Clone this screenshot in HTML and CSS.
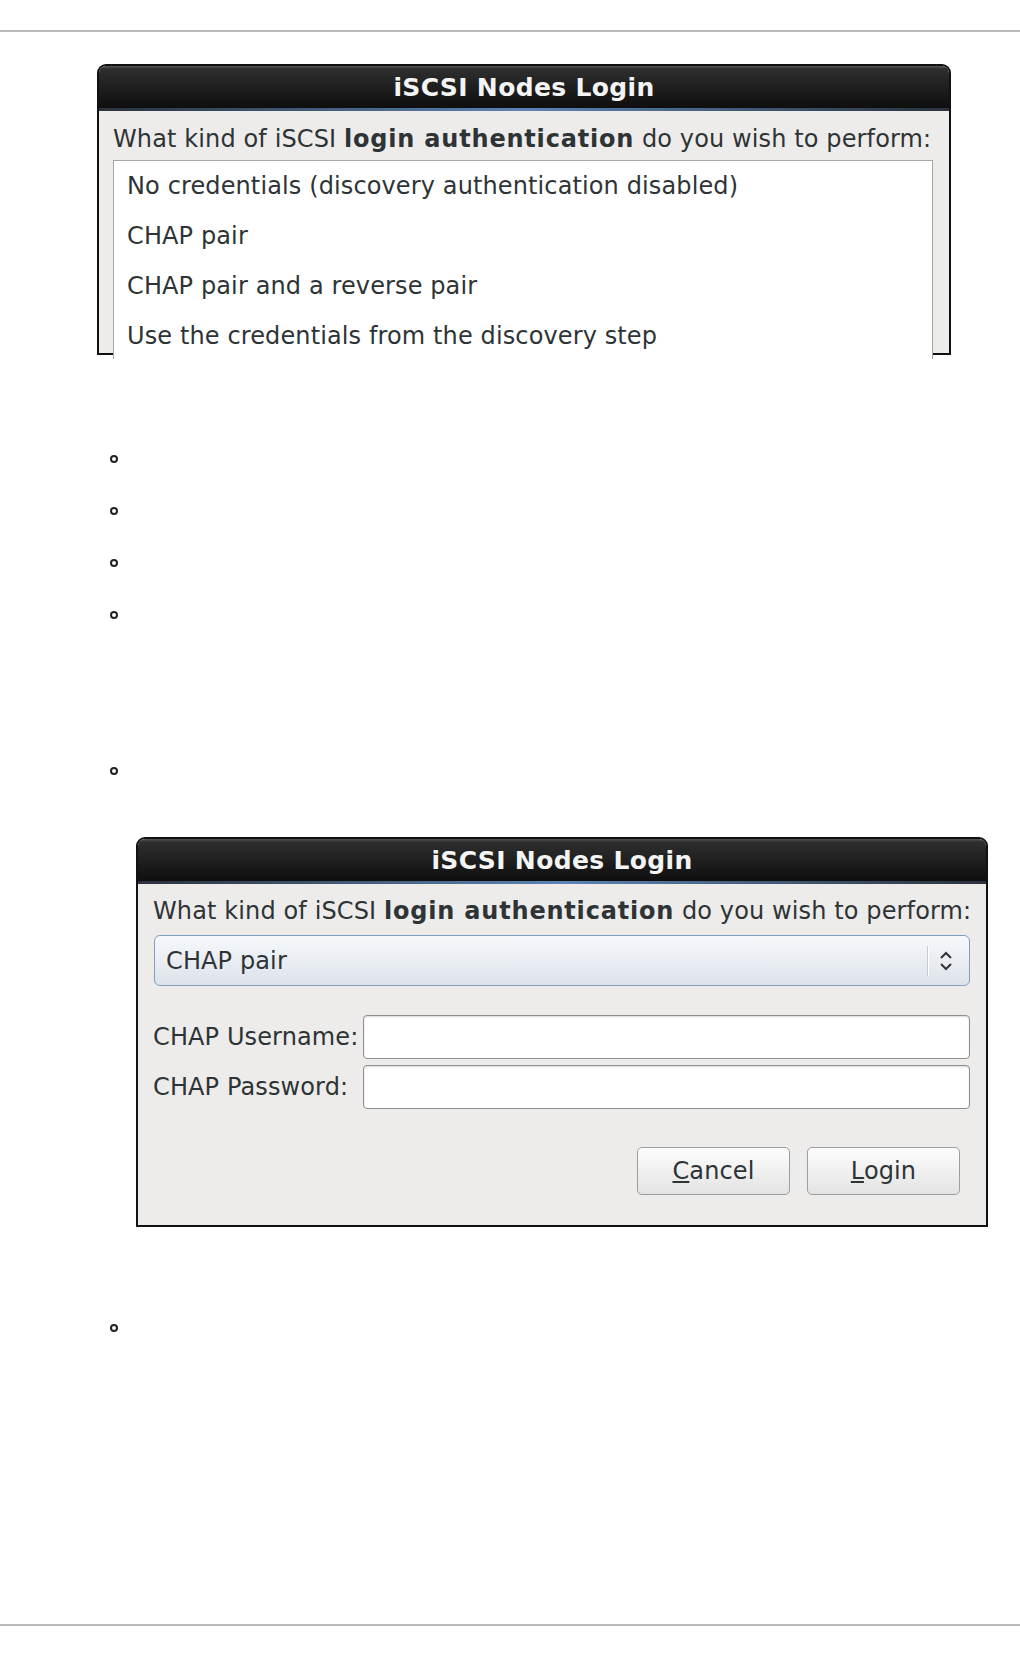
FILE: index.html
```html
<!DOCTYPE html>
<html lang="en">
<head>
    <meta charset="UTF-8">
    <title>iSCSI Nodes Login</title>
    <link rel="stylesheet" href="styles.css">
</head>
<body>
<div class="page">
    <div class="top-rule"></div>

    <div class="content">
        <div class="dialog dialog-list">
            <div class="dialog-title">iSCSI Nodes Login</div>
            <div class="dialog-body">
                <p class="question">What kind of iSCSI <b>login authentication</b> do you wish to perform:</p>
                <ul class="listbox">
                    <li>No credentials (discovery authentication disabled)</li>
                    <li>CHAP pair</li>
                    <li>CHAP pair and a reverse pair</li>
                    <li>Use the credentials from the discovery step</li>
                </ul>
            </div>
        </div>

        <ul class="steps">
            <li class="step"><div class="step-mark"><span class="ring"></span></div></li>
            <li class="step"><div class="step-mark"><span class="ring"></span></div></li>
            <li class="step"><div class="step-mark"><span class="ring"></span></div></li>
            <li class="step"><div class="step-mark"><span class="ring"></span></div></li>
            <li class="step step-figure">
                <div class="step-mark"><span class="ring"></span></div>
                <div class="dialog dialog-form">
                    <div class="dialog-title">iSCSI Nodes Login</div>
                    <div class="dialog-body">
                        <p class="question">What kind of iSCSI <b>login authentication</b> do you wish to perform:</p>
                        <div class="combo">
                            <span class="combo-value">CHAP pair</span>
                            <span class="combo-sep"></span>
                            <span class="combo-arrow">
                                <svg width="14" height="22" viewBox="0 0 14 22">
                                    <polyline points="2,8 7,3 12,8" fill="none" stroke="#333" stroke-width="2"/>
                                    <polyline points="2,14 7,19 12,14" fill="none" stroke="#333" stroke-width="2"/>
                                </svg>
                            </span>
                        </div>
                        <div class="fields">
                            <label for="chap-user">CHAP Username:</label>
                            <input type="text" id="chap-user" class="entry">
                            <label for="chap-pass">CHAP Password:</label>
                            <input type="password" id="chap-pass" class="entry">
                        </div>
                        <div class="buttons">
                            <button class="btn"><u>C</u>ancel</button>
                            <button class="btn"><u>L</u>ogin</button>
                        </div>
                    </div>
                </div>
            </li>
            <li class="step step-last"><div class="step-mark"><span class="ring"></span></div></li>
        </ul>
    </div>

    <div class="bottom-rule"></div>
</div>
</body>
</html>
```

FILE: styles.css
```css
body {
    margin: 0;
    font-family: "DejaVu Sans", sans-serif;
    letter-spacing: 0.12px;
    color: #2e3436;
    background: #fff;
}

.page {
    display: flex;
    flex-direction: column;
    min-height: 100vh;
}

.top-rule {
    height: 30px;
    border-bottom: 2px solid #bdbdbd;
}

.bottom-rule {
    margin-top: auto;
    height: 30px;
    border-top: 2px solid #bdbdbd;
}

.content {
    padding: 32px 0 0 97px;
}

/* dialog window */
.dialog {
    box-sizing: border-box;
    border: 2px solid #111;
    border-radius: 9px 9px 0 0;
    background: #edeceb;
}

.dialog-list {
    width: 854px;
    height: 291px;
}

.dialog-form {
    width: 852px;
    height: 390px;
    margin: 40px 0 0 26px;
}

.dialog-title {
    height: 42px;
    line-height: 44px;
    padding-bottom: 3px;
    border-radius: 7px 7px 0 0;
    text-align: center;
    color: #f4f4f4;
    font-size: 25px;
    font-weight: bold;
    letter-spacing: 0.35px;
    background:
        linear-gradient(to right, #2a323c, #5b84b4 50%, #2a323c) bottom / 100% 3px no-repeat,
        linear-gradient(#555 0, #2e2e2e 3px, #1e1e1e 50%, #0c0c0c);
}

.dialog-list .dialog-body {
    padding: 7px 16px 0 14px;
}

.dialog-form .dialog-body {
    padding: 6px 16px 0 16px;
}

.question {
    margin: 0;
    height: 42px;
    line-height: 42px;
    font-size: 24px;
    white-space: nowrap;
}

.dialog-form .question {
    margin-left: -1px;
}

.question b {
    letter-spacing: 0.8px;
}

/* list of auth types */
.listbox {
    list-style: none;
    margin: 0;
    padding: 0 0 0 13px;
    height: 198px;
    overflow: hidden;
    background: #fff;
    border: 1px solid #a6a6a6;
    border-bottom: none;
}

.listbox li {
    height: 50px;
    line-height: 50px;
    font-size: 24px;
    white-space: nowrap;
}

/* combo box */
.combo {
    display: flex;
    align-items: center;
    height: 49px;
    margin-top: 3px;
    padding: 0 5px 0 11px;
    border: 1px solid #7f9ec2;
    border-radius: 6px;
    background: linear-gradient(#f6f8fb, #dde3ea);
}

.combo-value {
    flex: 1;
    font-size: 24px;
}

.combo-sep {
    width: 1px;
    height: 30px;
    background: #c6cacf;
    box-shadow: 1px 0 #fff;
}

.combo-arrow {
    width: 36px;
    display: flex;
    justify-content: center;
}

.combo-arrow svg {
    display: block;
}

/* username / password */
.fields {
    display: grid;
    grid-template-columns: auto 1fr;
    column-gap: 5px;
    row-gap: 6px;
    align-items: center;
    margin-top: 29px;
}

.fields label {
    font-size: 24px;
    white-space: nowrap;
    margin-left: -1px;
}

.entry {
    box-sizing: border-box;
    height: 44px;
    margin: 0;
    border: 1px solid #8f8f8f;
    border-radius: 4px;
    background: #fff;
    box-shadow: inset 0 1px 2px rgba(0, 0, 0, 0.15);
    outline: none;
}

.buttons {
    display: flex;
    justify-content: flex-end;
    gap: 17px;
    margin-top: 38px;
    padding-right: 10px;
}

.btn {
    box-sizing: border-box;
    width: 153px;
    height: 48px;
    border: 1px solid #9d9d9d;
    border-radius: 5px;
    background: linear-gradient(#fdfdfd, #e3e3e3);
    font-family: "DejaVu Sans", sans-serif;
    font-size: 24px;
    letter-spacing: 0.12px;
    color: #2e3436;
    cursor: pointer;
}

/* document steps */
.steps {
    list-style: none;
    margin: 78px 0 0;
    padding: 0 0 0 13px;
}

.step-mark {
    height: 52px;
    display: flex;
    align-items: center;
}

.ring {
    box-sizing: border-box;
    width: 8px;
    height: 8px;
    border: 2px solid #222;
    border-radius: 50%;
}

.step-figure {
    margin-top: 104px;
}

.step-last {
    margin-top: 75px;
}
```
